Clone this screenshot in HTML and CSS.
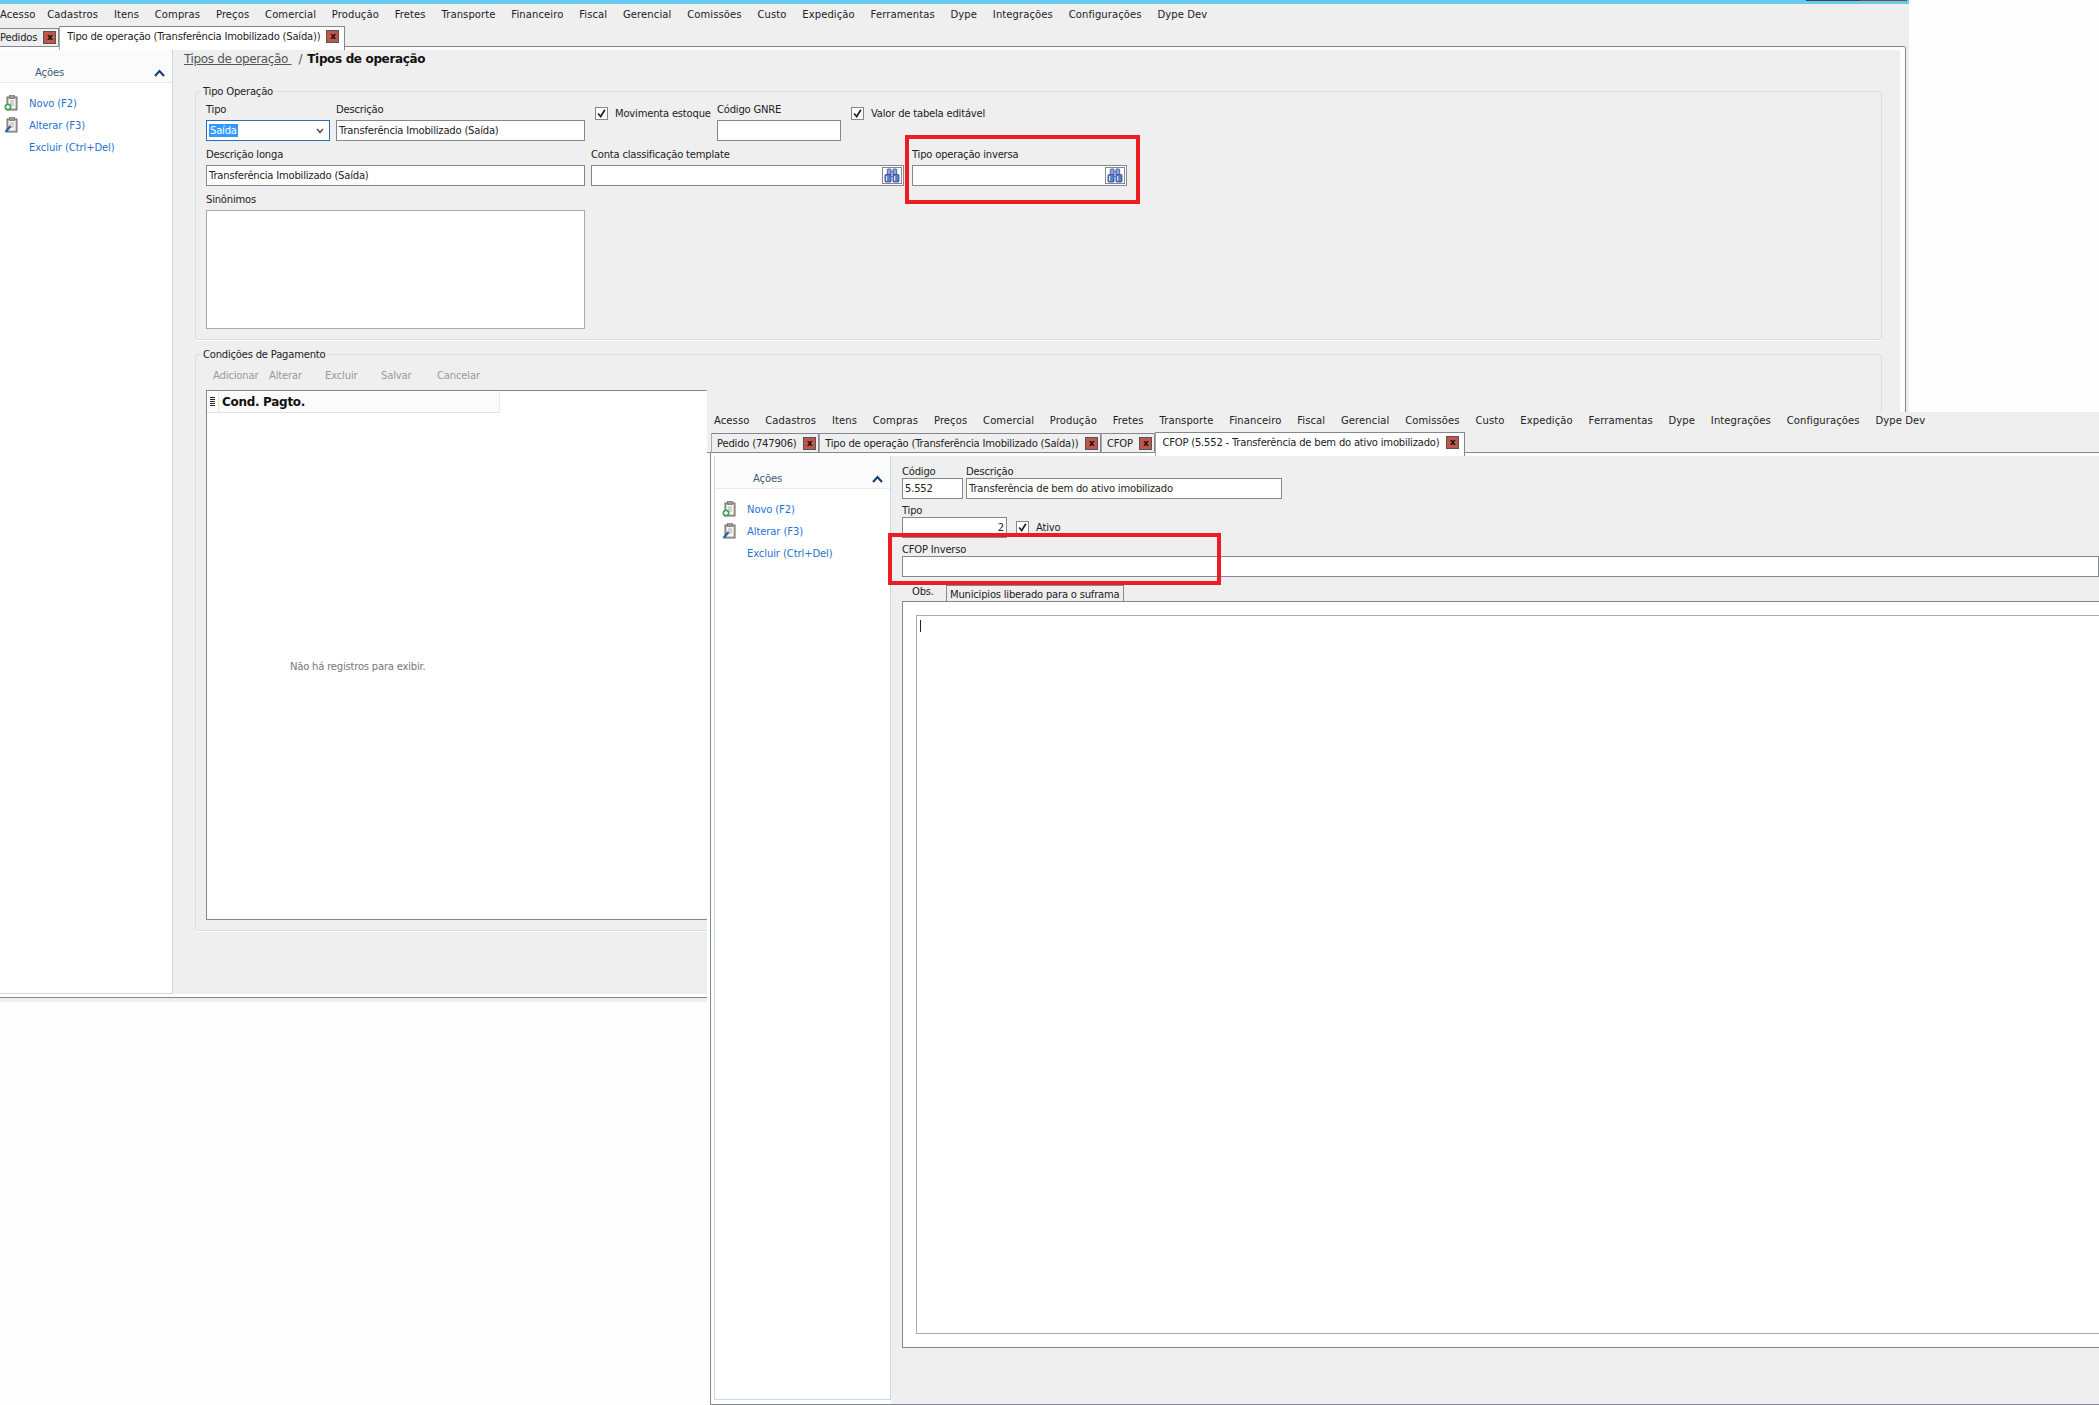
FILE: index.html
```html
<!DOCTYPE html>
<html lang="pt-BR">

<head>
    <meta charset="UTF-8">
    <title>Tipo de operação / CFOP</title>
    <link rel="stylesheet" href="styles.css">
</head>

<body>

    <svg class="icon-defs" xmlns="http://www.w3.org/2000/svg">
        <symbol id="ic-clip" viewBox="0 0 16 16">
            <rect x="3" y="2" width="10" height="13" fill="#b5a98f" stroke="#6f6f6f" />
            <rect x="4.5" y="3.5" width="7" height="10" fill="#f6f6f2" />
            <rect x="5.5" y="0.5" width="5" height="3" fill="#9a9a9a" stroke="#666" stroke-width="0.6" />
            <path d="M6 6h4M6 8h4M6 10h4" stroke="#9aa0a8" stroke-width="0.8" />
        </symbol>
        <symbol id="ic-bino" viewBox="0 0 16 16">
            <rect x="3" y="1" width="4" height="7" rx="1" fill="#8ea4db" stroke="#23408f" stroke-width="0.8" />
            <rect x="9" y="1" width="4" height="7" rx="1" fill="#8ea4db" stroke="#23408f" stroke-width="0.8" />
            <rect x="0.5" y="7" width="6.5" height="8" rx="1" fill="#5f7cc4" stroke="#23408f" stroke-width="0.8" />
            <rect x="9" y="7" width="6.5" height="8" rx="1" fill="#5f7cc4" stroke="#23408f" stroke-width="0.8" />
            <rect x="7" y="4" width="2" height="5" fill="#dfe6f6" stroke="#23408f" stroke-width="0.6" />
            <path d="M2.2 8.5v5M10.8 8.5v5" stroke="#dbe4f7" stroke-width="1.2" />
        </symbol>
        <symbol id="ic-check" viewBox="0 0 13 13">
            <path d="M2.5 6.5l3 3.5l5-8" fill="none" stroke="#222" stroke-width="2" />
        </symbol>
        <symbol id="ic-up" viewBox="0 0 11 8">
            <path d="M1 7l4.5-5l4.5 5" fill="none" stroke="#0d3b78" stroke-width="2" />
        </symbol>
    </svg>

    <!-- janela de tras -->
    <div class="window window-back">
        <div class="topbar"><span class="sliver-dark"></span><span class="sliver-red"></span></div>
        <div class="menu">
            <span>Acesso</span><span>Cadastros</span><span>Itens</span><span>Compras</span><span>Preços</span>
            <span>Comercial</span><span>Produção</span><span>Fretes</span><span>Transporte</span><span>Financeiro</span>
            <span>Fiscal</span><span>Gerencial</span><span>Comissões</span><span>Custo</span><span>Expedição</span>
            <span>Ferramentas</span><span>Dype</span><span>Integrações</span><span>Configurações</span><span>Dype Dev</span>
        </div>
        <div class="tabs">
            <div class="tab tab-first">Pedidos <span class="close">x</span></div>
            <div class="tab tab-active">Tipo de operação (Transferência Imobilizado (Saída)) <span class="close">x</span></div>
        </div>
        <div class="panel">
            <div class="sidebar">
                <div class="side-head"><span>Ações</span><svg class="chevron"><use href="#ic-up" /></svg></div>
                <div class="side-list">
                    <a class="side-item"><svg class="side-icon" viewBox="0 0 16 16"><use href="#ic-clip" /><circle cx="4" cy="12" r="3.5" fill="#3fa35a" /><path d="M4 10v4M2 12h4" stroke="#fff" stroke-width="1.4" /></svg>Novo (F2)</a>
                    <a class="side-item"><svg class="side-icon" viewBox="0 0 16 16"><use href="#ic-clip" /><path d="M1.5 15l5-6" stroke="#2a5fb0" stroke-width="2.2" /></svg>Alterar (F3)</a>
                    <a class="side-item"><span class="side-icon"></span>Excluir (Ctrl+Del)</a>
                </div>
            </div>
            <div class="content">
                <div class="crumbs"><u>Tipos de operação&nbsp;</u><span class="crumb-sep">/</span><b>Tipos de operação</b></div>

                <fieldset class="box box-tipo">
                    <legend>Tipo Operação</legend>
                    <div class="row">
                        <div class="field w-tipo">
                            <label>Tipo</label>
                            <div class="input select"><span class="selected">Saída</span><svg class="select-arrow" viewBox="0 0 8 6"><path d="M1 1l3 3.5l3-3.5" fill="none" stroke="#555" stroke-width="1.6" /></svg></div>
                        </div>
                        <div class="field w-desc">
                            <label>Descrição</label>
                            <div class="input">Transferência Imobilizado (Saída)</div>
                        </div>
                        <div class="check-field w-mov"><span class="check"><svg><use href="#ic-check" /></svg></span>Movimenta estoque</div>
                        <div class="field w-gnre">
                            <label>Código GNRE</label>
                            <div class="input"></div>
                        </div>
                        <div class="check-field w-valor"><span class="check"><svg><use href="#ic-check" /></svg></span>Valor de tabela editável</div>
                    </div>
                    <div class="row">
                        <div class="field w-longa">
                            <label>Descrição longa</label>
                            <div class="input">Transferência Imobilizado (Saída)</div>
                        </div>
                        <div class="field w-conta">
                            <label>Conta classificação template</label>
                            <div class="input lookup"><span class="lookup-btn"><svg><use href="#ic-bino" /></svg></span></div>
                        </div>
                        <div class="field w-inversa">
                            <label>Tipo operação inversa</label>
                            <div class="input lookup"><span class="lookup-btn"><svg><use href="#ic-bino" /></svg></span></div>
                        </div>
                    </div>
                    <div class="row">
                        <div class="field w-longa">
                            <label>Sinônimos</label>
                            <div class="input textarea"></div>
                        </div>
                    </div>
                </fieldset>

                <fieldset class="box box-pagto">
                    <legend>Condições de Pagamento</legend>
                    <div class="toolbar">
                        <span class="t-add">Adicionar</span><span class="t-alt">Alterar</span><span class="t-exc">Excluir</span><span class="t-sal">Salvar</span><span>Cancelar</span>
                    </div>
                    <div class="grid">
                        <div class="grid-head">
                            <span class="grid-handle"></span>
                            <span class="grid-title">Cond. Pagto.</span>
                        </div>
                        <div class="grid-empty">Não há registros para exibir.</div>
                    </div>
                </fieldset>
            </div>
        </div>
        <div class="red-box red-box-back"></div>
    </div>

    <!-- janela da frente -->
    <div class="window window-front">
        <div class="menu">
            <span>Acesso</span><span>Cadastros</span><span>Itens</span><span>Compras</span><span>Preços</span>
            <span>Comercial</span><span>Produção</span><span>Fretes</span><span>Transporte</span><span>Financeiro</span>
            <span>Fiscal</span><span>Gerencial</span><span>Comissões</span><span>Custo</span><span>Expedição</span>
            <span>Ferramentas</span><span>Dype</span><span>Integrações</span><span>Configurações</span><span>Dype Dev</span>
        </div>
        <div class="tabs">
            <div class="tab">Pedido (747906) <span class="close">x</span></div>
            <div class="tab">Tipo de operação (Transferência Imobilizado (Saída)) <span class="close">x</span></div>
            <div class="tab">CFOP <span class="close">x</span></div>
            <div class="tab tab-active">CFOP (5.552 - Transferência de bem do ativo imobilizado) <span class="close">x</span></div>
        </div>
        <div class="panel">
            <div class="sidebar">
                <div class="side-head"><span>Ações</span><svg class="chevron"><use href="#ic-up" /></svg></div>
                <div class="side-list">
                    <a class="side-item"><svg class="side-icon" viewBox="0 0 16 16"><use href="#ic-clip" /><circle cx="4" cy="12" r="3.5" fill="#3fa35a" /><path d="M4 10v4M2 12h4" stroke="#fff" stroke-width="1.4" /></svg>Novo (F2)</a>
                    <a class="side-item"><svg class="side-icon" viewBox="0 0 16 16"><use href="#ic-clip" /><path d="M1.5 15l5-6" stroke="#2a5fb0" stroke-width="2.2" /></svg>Alterar (F3)</a>
                    <a class="side-item"><span class="side-icon"></span>Excluir (Ctrl+Del)</a>
                </div>
            </div>
            <div class="content">
                <div class="row">
                    <div class="field w-cod">
                        <label>Código</label>
                        <div class="input">5.552</div>
                    </div>
                    <div class="field w-cfop-desc">
                        <label>Descrição</label>
                        <div class="input">Transferência de bem do ativo imobilizado</div>
                    </div>
                </div>
                <div class="row">
                    <div class="field w-num">
                        <label>Tipo</label>
                        <div class="input input-num">2</div>
                    </div>
                    <div class="check-field w-ativo"><span class="check"><svg><use href="#ic-check" /></svg></span>Ativo</div>
                </div>
                <div class="row">
                    <div class="field w-full">
                        <label>CFOP Inverso</label>
                        <div class="input"></div>
                    </div>
                </div>
                <div class="sub-tabs">
                    <div class="sub-tab sub-tab-active">Obs.</div>
                    <div class="sub-tab">Municipios liberado para o suframa</div>
                </div>
                <div class="sub-panel">
                    <div class="input obs"><span class="caret"></span></div>
                </div>
            </div>
        </div>
        <div class="red-box red-box-front"></div>
    </div>

</body>

</html>
```

FILE: styles.css
```css
* {
    box-sizing: border-box;
}

html,
body {
    margin: 0;
    height: 100%;
    overflow: hidden;
}

body {
    position: relative;
    background-color: #fefefe;
    color: #222;
    font-family: "DejaVu Sans", sans-serif;
    font-size: 10px;
    letter-spacing: -0.2px;
}

.icon-defs {
    display: none;
}

/* janelas */
.window {
    position: absolute;
    overflow: hidden;
    background-color: #efefef;
}

.window-back {
    left: 0;
    top: 0;
    width: 1909px;
    height: 1002px;
}

.window-front {
    left: 707px;
    top: 412px;
    width: 1392px;
    height: 993px;
}

.topbar {
    display: flex;
    justify-content: flex-end;
    align-items: flex-start;
    height: 4px;
    padding-right: 2px;
    background-color: #66cbec;
}

.sliver-dark {
    width: 54px;
    height: 1px;
    background-color: #444;
}

.sliver-red {
    width: 47px;
    height: 1px;
    background-color: #8a4a44;
}

.menu {
    display: flex;
    gap: 15.8px;
    height: 20px;
    line-height: 21px;
    letter-spacing: 0.1px;
    white-space: nowrap;
}

.window-back .menu span:first-child {
    margin-right: -4px;
}

.window-front .menu {
    margin-left: 7px;
    line-height: 18px;
}

/* abas */
.tabs {
    display: flex;
    align-items: flex-end;
    height: 23px;
    border-bottom: 1px solid #85868e;
    margin-right: 4px;
}

.window-front .tabs {
    height: 21px;
    margin-right: 0;
    padding-left: 4px;
}

.tab {
    display: flex;
    align-items: center;
    justify-content: space-between;
    gap: 6px;
    height: 19px;
    padding: 0 2px 0 5px;
    margin-bottom: -1px;
    border: 1px solid #85868e;
    border-left-color: #a9a9a9;
    white-space: nowrap;
}

.window-front .tab {
    gap: 6.6px;
    height: 20px;
}

.tab-first {
    margin-left: -1px;
    padding-left: 0;
}

.tabs .tab-active {
    position: relative;
    z-index: 1;
    align-self: flex-start;
    height: 24px;
    margin-top: 2px;
    margin-bottom: -3px;
    padding: 0 5px 5px 7px;
    border-bottom: none;
    background-color: #fff;
}

.window-front .tabs .tab-active {
    height: 24px;
    margin-top: 0;
    padding-left: 6px;
}

.close {
    display: block;
    width: 13px;
    height: 13px;
    border: 1px solid #555;
    background-color: #c0564a;
    color: #111;
    font-size: 9px;
    font-weight: bold;
    line-height: 10px;
    text-align: center;
}

/* painel */
.panel {
    display: flex;
    margin-right: 3px;
    padding: 3px 5px 3px 0;
    border-right: 1px solid #85868e;
    border-bottom: 1px solid #85868e;
    background-color: #fff;
}

.window-front .panel {
    height: 952px;
    margin-left: 3px;
    margin-right: 0;
    padding: 3px 0 0 3px;
    border-right: none;
    border-left: 1px solid #85868e;
    box-shadow: -3px 0 0 #fff;
}

.sidebar {
    flex: none;
    width: 177px;
    height: 944px;
    margin-left: -4px;
    border: 1px solid #c9d9e6;
    border-top: none;
    background-color: #fff;
    letter-spacing: -0.1px;
}

.window-front .sidebar {
    margin-left: 0;
}

.side-head {
    display: flex;
    align-items: center;
    justify-content: space-between;
    height: 33px;
    padding: 14px 7px 0 38px;
    line-height: 18px;
    border-bottom: 1px solid #e6e9ee;
    background-color: #fbfbfb;
    color: #3b5a78;
}

.chevron {
    width: 11px;
    height: 8px;
}

.side-list {
    padding-top: 9px;
}

.side-item {
    display: flex;
    align-items: center;
    gap: 9px;
    height: 22px;
    padding-left: 7px;
    color: #1f73d2;
}

.side-icon {
    display: block;
    flex: none;
    width: 16px;
    height: 16px;
}

.content {
    flex: 1;
    height: 944px;
    padding-left: 11px;
    background-color: #efefef;
}

.window-front .content {
    display: flex;
    flex-direction: column;
    height: auto;
    padding-top: 9px;
    min-width: 0;
}

.crumbs {
    height: 18px;
    color: #555;
    font-size: 12px;
    line-height: 18px;
    letter-spacing: -0.35px;
}

.crumb-sep {
    margin: 0 5px 0 7px;
}

.crumbs b {
    color: #111;
}

/* caixas */
.box {
    min-width: 0;
    margin: 16px 18px 0 11px;
    padding: 4px 10px 10px 10px;
    border: 1px solid #d2deE8;
    border-radius: 3px;
    box-shadow: 0 1px 0 #fff;
}

.box legend {
    margin-left: -5px;
    padding: 1px 2px 0;
    line-height: 14px;
}

.box-pagto {
    margin-top: 7px;
    padding: 0 10px 10px 10px;
}

.row {
    display: flex;
    gap: 6px;
    margin-bottom: 7px;
}

.row:last-child {
    margin-bottom: 0;
}

.window-front .row {
    gap: 3px;
    margin-bottom: 5px;
}

.field label {
    display: block;
    margin-bottom: 3px;
    line-height: 14px;
    white-space: nowrap;
}

.window-front .field label {
    margin-bottom: -1px;
}

.input {
    height: 21px;
    padding-left: 2px;
    border: 1px solid #85868e;
    background-color: #fff;
    line-height: 19px;
    white-space: nowrap;
}

.input-num {
    padding-right: 2px;
    text-align: right;
}

.textarea {
    height: 119px;
    border-color: #a9a9a9;
}

.select {
    display: flex;
    align-items: center;
    justify-content: space-between;
    padding-right: 5px;
    border-color: #2f6fae;
}

.selected {
    padding: 0 1px;
    background-color: #3399ff;
    color: #fff;
    line-height: 13px;
}

.select-arrow {
    width: 8px;
    height: 6px;
}

.lookup {
    display: flex;
    align-items: center;
    justify-content: flex-end;
    padding-right: 1px;
}

.lookup-btn {
    display: flex;
    align-items: center;
    justify-content: center;
    width: 20px;
    height: 17px;
    border: 1px solid #85868e;
    background-color: #fff;
}

.lookup-btn svg {
    width: 16px;
    height: 15px;
}

.check-field {
    display: flex;
    align-items: center;
    gap: 7px;
    height: 13px;
    margin-top: 4px;
    white-space: nowrap;
}

.check {
    display: block;
    flex: none;
    width: 13px;
    height: 13px;
    border: 1px solid #85868e;
    background-color: #fff;
}

.check svg {
    display: block;
    width: 11px;
    height: 11px;
}

.w-tipo {
    width: 124px;
}

.w-desc {
    width: 249px;
}

.w-mov {
    width: 116px;
    margin-left: 4px;
}

.w-gnre {
    width: 124px;
}

.w-valor {
    margin-left: 4px;
}

.w-longa {
    width: 379px;
}

.w-conta {
    width: 313px;
}

.w-inversa {
    width: 215px;
    margin-left: 2px;
}

.w-cod {
    width: 61px;
}

.w-cfop-desc {
    width: 316px;
}

.w-num {
    width: 105px;
}

.w-ativo {
    margin-top: 17px;
    margin-left: 6px;
}

.w-full {
    flex: 1;
}

/* condicoes de pagamento */
.toolbar {
    display: flex;
    align-items: center;
    height: 28px;
    padding: 0 0 2px 7px;
    color: #9a9a9a;
    white-space: nowrap;
    letter-spacing: -0.15px;
}

.toolbar span {
    display: block;
}

.t-add {
    width: 56px;
}

.t-alt {
    width: 56px;
}

.t-exc {
    width: 56px;
}

.t-sal {
    width: 56px;
}

.grid {
    display: flex;
    flex-direction: column;
    width: 501px;
    height: 530px;
    border: 1px solid #85868e;
    border-right: none;
    background-color: #fff;
}

.grid-head {
    display: flex;
    flex: none;
    width: 293px;
    height: 22px;
    border-bottom: 1px solid #e2e2e2;
    border-right: 1px solid #e8e8e8;
    background-color: #fbfbfb;
}

.grid-handle {
    width: 12px;
    border-right: 1px solid #e8e8e8;
    background: repeating-linear-gradient(#222 0 1px, transparent 1px 2px) center / 5px 10px no-repeat;
}

.grid-title {
    padding-left: 3px;
    color: #111;
    font-size: 12px;
    font-weight: bold;
    line-height: 23px;
    letter-spacing: -0.3px;
}

.grid-empty {
    display: flex;
    flex: 1;
    align-items: center;
    padding-left: 83px;
    color: #777;
}

/* abas internas do cfop */
.sub-tabs {
    display: flex;
    flex: none;
    height: 16px;
    margin-top: 3px;
    margin-left: 6px;
}

.sub-tab {
    padding: 0 3px;
    border: 1px solid #85868e;
    border-bottom: none;
    border-left: none;
    line-height: 17px;
}

.sub-tab-active {
    width: 39px;
    padding: 0 4px;
    border-top: none;
    line-height: 14px;
}

.sub-panel {
    flex: none;
    height: 747px;
    padding: 13px 0 13px 13px;
    border: 1px solid #85868e;
    border-right: none;
    background-color: #fff;
}

.obs {
    height: 100%;
    padding: 4px 0 0 3px;
    border-color: #a9a9a9;
    border-right: none;
}

.caret {
    display: block;
    width: 1px;
    height: 12px;
    background-color: #222;
}

/* marcacoes em vermelho */
.red-box {
    position: absolute;
    z-index: 2;
    border: 4px solid #ed1c24;
}

.red-box-back {
    left: 905px;
    top: 135px;
    width: 235px;
    height: 69px;
}

.red-box-front {
    left: 181px;
    top: 121px;
    width: 333px;
    height: 52px;
}
```
